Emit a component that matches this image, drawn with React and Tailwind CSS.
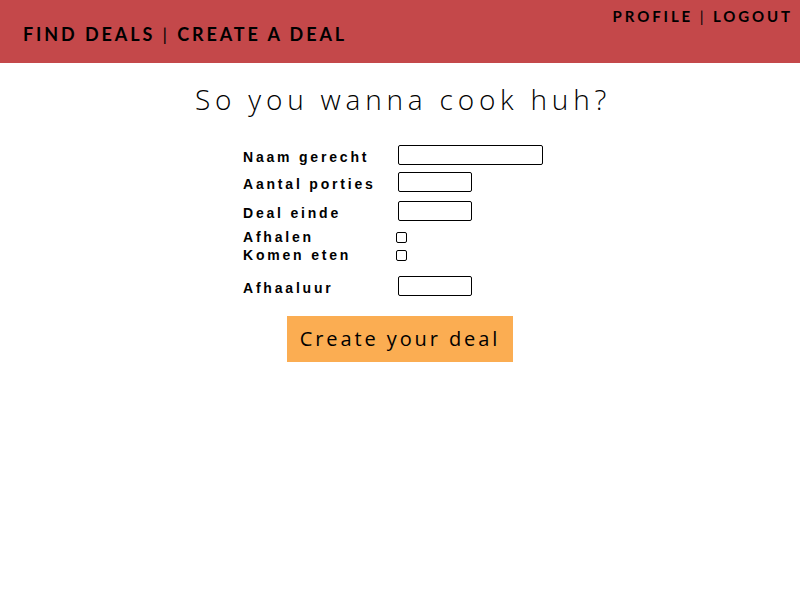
import React from "react";

const labelCls = "w-[155px] pt-[4px] text-[14px] font-bold tracking-[2.8px] text-black";
const inputCls = "h-[20px] border border-black rounded-[2px] bg-white px-1 text-[13px] outline-none";

export default function App() {
  return (
    <div className="min-h-screen bg-white" style={{ fontFamily: "'Liberation Sans', Arial, sans-serif" }}>
      <header className="h-[63px] bg-[#c4484a] flex justify-between px-[23px] pr-[7px]" style={{ fontFamily: "Lato, sans-serif" }}>
        <nav className="self-end pb-[15px] text-[18px] font-bold tracking-[2.9px] text-black">
          FIND DEALS <span className="font-normal">|</span> CREATE A DEAL
        </nav>
        <nav className="self-start pt-[5px] text-[15px] font-bold tracking-[2.9px] text-black">
          PROFILE <span className="font-normal">|</span> LOGOUT
        </nav>
      </header>

      <main className="flex flex-col items-center">
        <h1
          className="mt-[15px] ml-[6px] text-[28px] font-light tracking-[4.8px] text-black"
          style={{ fontFamily: "'Open Sans', sans-serif" }}
        >
          So you wanna cook huh?
        </h1>

        <form className="mt-[25px] w-[314px] flex flex-col">
          <div className="flex items-center h-[20px]">
            <label className={labelCls}>Naam gerecht</label>
            <input className={`${inputCls} w-[145px]`} />
          </div>
          <div className="flex items-center h-[20px] mt-[7px]">
            <label className={labelCls}>Aantal porties</label>
            <input className={`${inputCls} w-[74px]`} />
          </div>
          <div className="flex items-center h-[20px] mt-[9px]">
            <label className={labelCls}>Deal einde</label>
            <input className={`${inputCls} w-[74px]`} />
          </div>
          <div className="flex items-center h-[18px] mt-[7px]">
            <label className="w-[155px] text-[14px] font-bold tracking-[2.8px] text-black">Afhalen</label>
            <input type="checkbox" className="appearance-none ml-[-2px] w-[11px] h-[11px] border border-black rounded-[2px] bg-white" />
          </div>
          <div className="flex items-center h-[18px]">
            <label className="w-[155px] text-[14px] font-bold tracking-[2.8px] text-black">Komen eten</label>
            <input type="checkbox" className="appearance-none ml-[-2px] w-[11px] h-[11px] border border-black rounded-[2px] bg-white" />
          </div>
          <div className="flex items-center h-[20px] mt-[12px]">
            <label className={labelCls}>Afhaaluur</label>
            <input className={`${inputCls} w-[74px]`} />
          </div>
        </form>

        <button
          className="mt-[20px] w-[226px] h-[46px] bg-[#fbad52] text-[20px] tracking-[2.9px] text-black"
          style={{ fontFamily: "'Open Sans', sans-serif" }}
        >
          Create your deal
        </button>
      </main>
    </div>
  );
}
